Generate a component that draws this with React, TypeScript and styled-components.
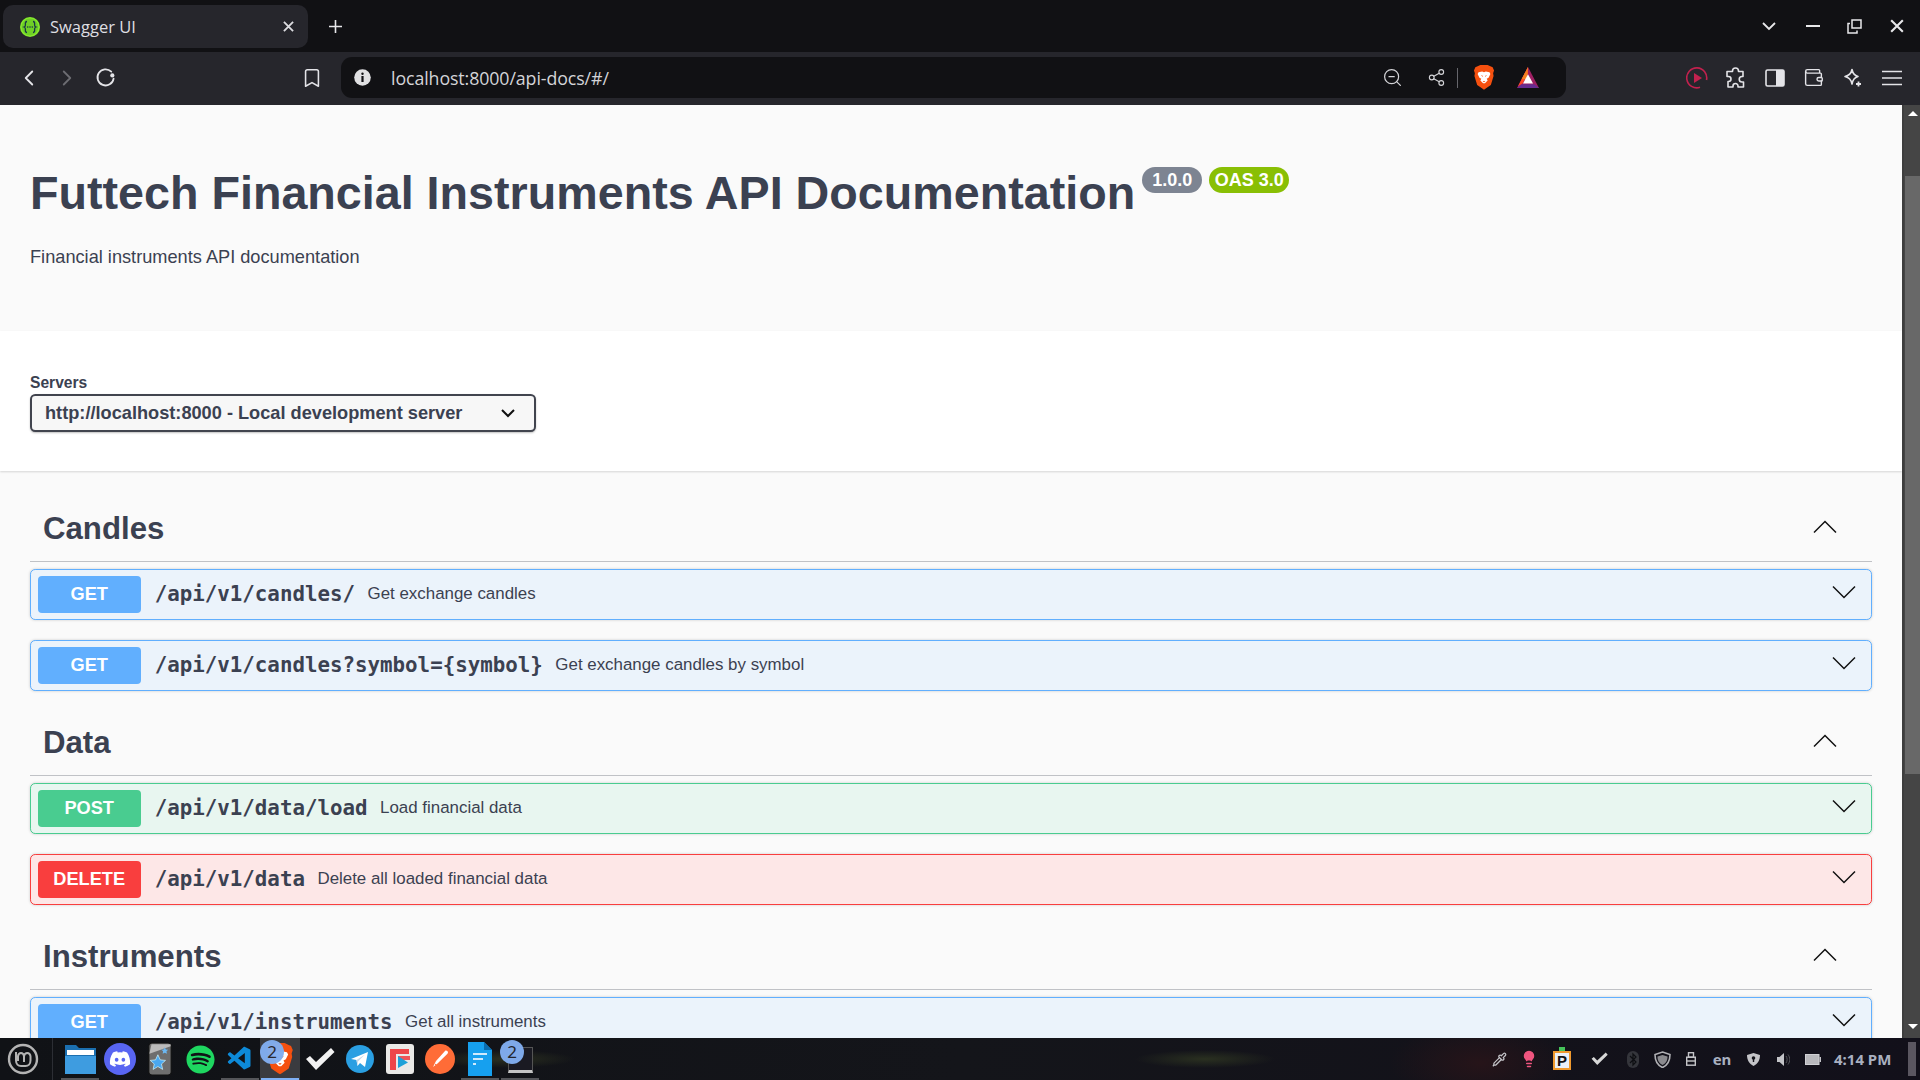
import React from 'react';
import styled, { createGlobalStyle } from 'styled-components';
import { ChevronLeft, ChevronRight, Bookmark, ZoomOut, Share2, Wallet, Pipette, Lightbulb } from 'lucide-react';
import { FaDiscord, FaSpotify } from 'react-icons/fa';
import { VscVscode } from 'react-icons/vsc';

const Global = createGlobalStyle`
  html, body { margin: 0; padding: 0; height: 100%; overflow: hidden; background: #111114; }
  * { box-sizing: border-box; }
`;

const Screen = styled.div`
  width: 1920px; height: 1080px; display: flex; flex-direction: column; overflow: hidden;
  font-family: "Liberation Sans", Arial, sans-serif;
`;

/* browser chrome */
const TabStrip = styled.div`
  height: 52px; flex: none; background: #111114; display: flex; align-items: flex-start; padding-left: 3px;
`;
const Tab = styled.div`
  width: 305px; height: 43px; margin-top: 5px; background: #26262c; border-radius: 10px;
  display: flex; align-items: center; padding: 0 14px 0 17px; color: #dcdce0;
`;
const TabTitle = styled.span`
  margin-left: 10px; flex: 1; font: 400 16.500px "Open Sans", "Noto Sans", sans-serif; color: #dedee2;
`;
const NewTab = styled.div`
  margin: 19px 0 0 20px; color: #e8e8ea; display: flex;
`;
const WindowControls = styled.div`
  margin-left: auto; display: flex; align-items: center; height: 52px; color: #e8e8ea;
`;
const WindowButton = styled.div<{ $w: number }>`
  width: ${p => p.$w}px; display: flex; justify-content: center; align-items: center;
`;
const Toolbar = styled.div`
  height: 53px; flex: none; background: #26262c; display: flex; align-items: center; padding: 0 9px 2px 10px;
`;
const Slot = styled.div<{ $dim?: boolean }>`
  width: 38px; height: 38px; flex: none; display: flex; align-items: center; justify-content: center;
  color: ${p => (p.$dim ? '#6c6c72' : '#e4e4e8')};
`;
const BookmarkSlot = styled(Slot)`
  margin-left: 169px;
`;
const ExtSlot = styled(Slot)`
  width: 39px;
`;
const UrlBar = styled.div`
  width: 1225px; height: 41px; flex: none; margin-left: 10px; background: #111114; border-radius: 11px;
  display: flex; align-items: center; padding: 0 12px 0 12px; color: #d4d4d8;
`;
const UrlInfo = styled.div`
  width: 18px; display: flex; align-items: center; justify-content: center;
`;
const UrlText = styled.span`
  margin-left: 20px; flex: 1; font: 400 17.800px "Open Sans", "Noto Sans", sans-serif; color: #d4d4d8;
  letter-spacing: -0.1px;
`;
const UrlIcon = styled.div<{ $w: number }>`
  width: ${p => p.$w}px; display: flex; justify-content: center; align-items: center;
`;
const UrlDivider = styled.div`
  width: 1px; height: 20px; background: #66666c; margin: 0 8px 0 2px;
`;
const ToolbarEnd = styled.div`
  margin-left: auto; display: flex; align-items: center;
`;

/* page viewport */
const Viewport = styled.div`
  flex: 1; min-height: 0; display: flex; background: #fafafa;
`;
const Doc = styled.div`
  flex: 1; min-width: 0; overflow: hidden; color: #3b4151;
`;
const Scrollbar = styled.div`
  width: 18px; flex: none; background: #454545; display: flex; flex-direction: column; align-items: center;
  padding-left: 2px; border-left: 2px solid #3e3e3e;
`;
const ArrowUp = styled.div`
  width: 0; height: 0; margin-top: 6px; margin-left: -1px;
  border-left: 5px solid transparent; border-right: 5px solid transparent; border-bottom: 5px solid #fff;
`;
const Thumb = styled.div`
  width: 15px; height: 598px; margin-top: 60px; margin-left: -1px; background: #686868;
`;
const ArrowDown = styled.div`
  width: 0; height: 0; margin-top: 250px; margin-left: -1px;
  border-left: 5px solid transparent; border-right: 5px solid transparent; border-top: 5px solid #fff;
`;

const InfoSection = styled.section`
  height: 226px; background: #fafafa; padding: 62px 30px 0;
`;
const TitleRow = styled.div`
  display: flex; align-items: flex-start;
`;
const Title = styled.h1`
  margin: 0; font: 700 46.670px/52px "Liberation Sans", Arial, sans-serif; color: #3b4151; white-space: nowrap;
`;
const Badge = styled.span<{ $bg: string; $w: number }>`
  width: ${p => p.$w}px; height: 26px; margin: 0 0 0 7px; border-radius: 14px; background: ${p => p.$bg};
  color: #fff; font: 700 18px/26px "Liberation Sans", Arial, sans-serif; text-align: center; flex: none;
`;
const Description = styled.p`
  margin: 23.500px 0 0; font: 400 18.200px/28px "Liberation Sans", Arial, sans-serif; color: #3b4151;
`;
const SchemeSection = styled.section`
  height: 140px; background: #fff; padding: 43px 30px 0; box-shadow: 0 1px 2px 0 rgba(0, 0, 0, 0.15);
  position: relative;
`;
const ServersLabel = styled.div`
  font: 700 15.600px/18px "Liberation Sans", Arial, sans-serif; color: #3b4151;
`;
const ServerSelect = styled.div`
  width: 506px; height: 38px; margin-top: 2px; border: 2.600px solid #41444e; border-radius: 5.200px; background: #f7f7f7;
  box-shadow: 0 1px 2px 0 rgba(0, 0, 0, 0.25); display: flex; align-items: center; justify-content: space-between;
  padding: 0 19px 0 13px; font: 700 18.200px "Liberation Sans", Arial, sans-serif; color: #3b4151;
`;
const Main = styled.main`
  padding: 26px 30px 0;
`;
const TagHeader = styled.div`
  height: 64.670px; border-bottom: 1px solid rgba(59, 65, 81, 0.3); margin-bottom: 7.330px; padding: 0 35px 3px 13px;
  display: flex; align-items: center; justify-content: space-between;
`;
const TagTitle = styled.h3`
  margin: 2px 0 0; font: 700 31.200px/1 "Liberation Sans", Arial, sans-serif; color: #3b4151;
`;
const TagChev = styled.div`
  display: flex; margin-top: -1px;
`;
const colors = {
  get: { border: '#61affe', bg: '#ebf3fb', btn: '#61affe' },
  post: { border: '#49cc90', bg: '#e8f6f0', btn: '#49cc90' },
  delete: { border: '#f93e3e', bg: '#fde7e7', btn: '#f93e3e' },
};
type Method = keyof typeof colors;
const Op = styled.div<{ $m: Method }>`
  height: 51px; margin-bottom: 20px; padding: 0 15px 0 6.700px; display: flex; align-items: center; flex: none;
  border: 1.300px solid ${p => colors[p.$m].border}; background: ${p => colors[p.$m].bg}; border-radius: 5.200px;
  box-shadow: 0 0 3px rgba(0, 0, 0, 0.19);
`;
const MethodButton = styled.span<{ $m: Method }>`
  width: 103px; height: 37px; flex: none; background: ${p => colors[p.$m].btn}; border-radius: 4px; color: #fff;
  font: 700 18.200px/36px "Liberation Sans", Arial, sans-serif; text-align: center;
`;
const Path = styled.span`
  margin-left: 14px; font: 700 20.800px "DejaVu Sans Mono", monospace; color: #3b4151; white-space: nowrap;
`;
const Summary = styled.span`
  margin-left: 12.500px; font: 400 16.900px "Liberation Sans", Arial, sans-serif; color: #3b4151; white-space: nowrap;
`;
const OpChevron = styled.div`
  margin-left: auto; display: flex; margin-top: -5px;
`;

/* taskbar */
const Taskbar = styled.footer`
  height: 42px; flex: none; display: flex; align-items: center;
  background:
    radial-gradient(ellipse 70px 9px at 505px 21px, #2b3020 0%, transparent 100%),
    radial-gradient(ellipse 70px 9px at 1205px 21px, #2a3020 0%, transparent 100%),
    radial-gradient(ellipse 90px 40px at 1480px 25px, #261419 0%, transparent 100%),
    linear-gradient(90deg, #101216, #14151a 50%, #12101a);
`;
const MintSlot = styled.div`
  width: 53px; height: 42px; flex: none; display: flex; justify-content: center; align-items: center;
  border-right: 1px solid #2c2e34; padding-right: 6px; margin-right: 7px;
`;
const Launcher = styled.div<{ $active?: boolean; $open?: boolean }>`
  width: 40px; height: 42px; flex: none; position: relative; display: flex; align-items: center; justify-content: center;
  background: ${p => (p.$active ? '#3a3b3f' : 'transparent')};
  &::after {
    content: ''; position: absolute; left: 1px; right: 1px; bottom: 0; height: 2px;
    background: ${p => (p.$active ? '#7fb0f4' : p.$open ? '#55565a' : 'transparent')};
  }
`;
const CountBadge = styled.span`
  position: absolute; top: 2px; left: 0; width: 24px; height: 24px; border-radius: 50%; background: #82aef0;
  color: #23262e; font: 400 17px/24px "Noto Sans", sans-serif; text-align: center; opacity: 0.97;
`;
const Tray = styled.div`
  margin-left: auto; display: flex; align-items: center; height: 42px; padding-right: 4px;
`;
const TrayItem = styled.div<{ $w: number }>`
  width: ${p => p.$w}px; flex: none; display: flex; justify-content: center; align-items: center; color: #c4c4c8;
`;
const LangText = styled.span`
  font: 700 15px "Noto Sans", sans-serif; color: #a9b0c0;
`;
const Clock = styled.span`
  margin: 0 10px 0 6px; width: 64px; font: 700 15px "Noto Sans", sans-serif; color: #a9b0c0; white-space: nowrap;
`;
const Handle = styled.div`
  width: 8px; height: 34px; background: #5a5660;
`;
const ClipboardP = styled.div`
  width: 18px; height: 19px; border: 2px solid #f09a2e; background: #eaf0f8; margin-top: 3px; position: relative;
  font: 700 15px/15px "Liberation Sans", sans-serif; color: #111; text-align: center;
  &::before {
    content: ''; position: absolute; top: -6px; left: 4px; width: 6px; height: 4px; background: #45c45a;
  }
`;

const Swag = ({ size = 20 }: { size?: number }) => (
  <svg width={size} height={size} viewBox="0 0 20 20">
    <circle cx="10" cy="10" r="10" fill="#85ea2d" />
    <circle cx="10" cy="10" r="8.400" fill="#6fcf26" />
    <path d="M7 4.500c-2 0-1.600 2-1.600 3.400 0 1-.4 1.800-1.300 2.100.9.3 1.300 1.100 1.300 2.100 0 1.400-.4 3.400 1.600 3.400M13 4.500c2 0 1.600 2 1.600 3.400 0 1 .4 1.800 1.300 2.100-.9.3-1.300 1.100-1.300 2.100 0 1.400.4 3.400-1.600 3.400" fill="none" stroke="#173647" strokeWidth="1.300" />
    <circle cx="7.700" cy="10" r=".8" fill="#173647" /><circle cx="10" cy="10" r=".8" fill="#173647" /><circle cx="12.300" cy="10" r=".8" fill="#173647" />
  </svg>
);
const CloseX = ({ size = 12, w = 2 }: { size?: number; w?: number }) => (
  <svg width={size} height={size} viewBox="0 0 12 12"><path d="M1 1l10 10M11 1L1 11" stroke="currentColor" strokeWidth={w} fill="none" /></svg>
);
const Plus = () => (
  <svg width="15" height="15" viewBox="0 0 15 15"><path d="M7.500 1v13M1 7.500h13" stroke="currentColor" strokeWidth="1.600" /></svg>
);
const Reload = () => (
  <svg width="21" height="21" viewBox="0 0 20 20">
    <path d="M15.500 4.400A7.700 7.700 0 1 0 17.700 11" fill="none" stroke="currentColor" strokeWidth="1.700" strokeLinecap="round" />
    <circle cx="16.500" cy="8" r="2" fill="currentColor" />
  </svg>
);
const InfoDot = () => (
  <svg width="17" height="17" viewBox="0 0 17 17">
    <circle cx="8.500" cy="8.500" r="8.300" fill="#e0e0e2" />
    <circle cx="8.500" cy="4.800" r="1.200" fill="#111114" /><rect x="7.400" y="7" width="2.200" height="6" fill="#111114" />
  </svg>
);
const Brave = ({ size = 22 }: { size?: number }) => (
  <svg width={size} height={size * 1.12} viewBox="0 0 24 27">
    <path d="M5 1.500 8 0h8l3 1.500 2.500 1 1.500 3.500-1 3 .5 3-3 10-6 4-1.500 1-1.500-1-6-4-3-10 .5-3-1-3L2.500 2.500z" fill="#f5500f" />
    <path d="M6 8l4-1 2 1 2-1 4 1 1 2-2 4-2 1 1 2-3 3h-2l-3-3 1-2-2-1-2-4z" fill="#fff" />
    <path d="M8.500 11l2.500 1-.5 1zM15.500 11l-2.500 1 .5 1zM10.500 17.500h3L12 19z" fill="#f5500f" />
  </svg>
);
const Bat = () => (
  <svg width="24" height="21" viewBox="0 0 24 23">
    <path d="M12 0 24 23H0z" fill="#9e1f63" />
    <path d="M12 0 1 21 6 18 12 7z" fill="#ff4724" />
    <path d="M12 0 5 13.500h6z" fill="#f58220" />
    <path d="M0 23l5-4h14l5 4z" fill="#662d91" />
    <path d="M12 8l5.500 10h-11z" fill="#fff" />
  </svg>
);
const Chev = ({ up, w = 24, h = 14, sw = 1.500 }: { up?: boolean; w?: number; h?: number; sw?: number }) => (
  <svg width={w} height={h} viewBox={`0 0 ${w} ${h}`}>
    <path d={up ? `M1 ${h - 1.500} ${w / 2} 1.500 ${w - 1} ${h - 1.500}` : `M1 1.500 ${w / 2} ${h - 1.500} ${w - 1} 1.500`} fill="none" stroke="#111" strokeWidth={sw} />
  </svg>
);
const SmallChev = ({ color = 'currentColor', w = 1.800 }: { color?: string; w?: number }) => (
  <svg width="14" height="9" viewBox="0 0 14 9"><path d="M1 1l6 6 6-6" fill="none" stroke={color} strokeWidth={w} /></svg>
);
const PlayRing = () => (
  <svg width="22" height="22" viewBox="0 0 22 22">
    <path d="M14 20.300A10 10 0 1 1 20.500 13" fill="none" stroke="#c2214e" strokeWidth="1.600" />
    <path d="M8 6l8 5-8 5z" fill="#c2214e" />
  </svg>
);
const PuzzlePiece = () => (
  <svg width="21" height="21" viewBox="0 0 21 21" fill="none" stroke="currentColor" strokeWidth="1.600" strokeLinejoin="round">
    <path d="M7.500 4.500V4a3 3 0 0 1 6 0v.5h4.500v5H17a2.500 2.500 0 0 0 0 5.500h1.500v5H13v-1a2.500 2.500 0 0 0-5 0v1H3v-5.500h.5a2.500 2.500 0 0 0 0-5H2v-5z" />
  </svg>
);
const SidePanel = () => (
  <svg width="20" height="20" viewBox="0 0 20 20">
    <rect x="1" y="2" width="18" height="16" rx="1.500" fill="none" stroke="currentColor" strokeWidth="1.600" />
    <rect x="11" y="2" width="8" height="16" fill="currentColor" />
  </svg>
);
const LeoStar = () => (
  <svg width="20" height="20" viewBox="0 0 20 20">
    <path d="M9 1.500c.8 4 2.500 6 6 7-3.500 1-5.200 3-6 7.500-.8-4.500-2.500-6.500-7-7.500 4.500-1 6.200-3 7-7z" fill="none" stroke="currentColor" strokeWidth="1.600" strokeLinejoin="round" />
    <path d="M15.500 13.500v5M13 16h5" stroke="currentColor" strokeWidth="1.800" />
  </svg>
);
const Burger = () => (
  <svg width="20" height="16" viewBox="0 0 20 16"><path d="M0 1.500h20M0 8h20M0 14.500h20" stroke="currentColor" strokeWidth="1.600" /></svg>
);
const Restore = () => (
  <svg width="15" height="15" viewBox="0 0 15 15" fill="none" stroke="currentColor" strokeWidth="1.500">
    <rect x="5" y="1" width="9" height="8" /><path d="M3 4.500H1v9.500h9v-2.500" />
  </svg>
);
const Minimize = () => (
  <svg width="14" height="4" viewBox="0 0 14 4"><path d="M0 2h14" stroke="currentColor" strokeWidth="2" /></svg>
);

const MintLogo = () => (
  <svg width="32" height="32" viewBox="0 0 32 32" fill="none" stroke="#b4b4b4">
    <circle cx="16" cy="16" r="14" strokeWidth="2.400" />
    <path d="M9 9v8.500c0 3.300 2.200 5.500 5 5.500h4.500c2.800 0 5-2.200 5-5.500V13.500c0-2-1.500-3.500-3.200-3.500S17 11.500 17 13.500V19M17 13.500c0-2-1.500-3.500-3-3.500s-3 1.500-3 3.500V18" strokeWidth="2" />
  </svg>
);
const Folder = () => (
  <svg width="31" height="30" viewBox="0 0 31 30">
    <path d="M0 1h11l3 3h17v26H0z" fill="#1b6fb0" />
    <rect x="2" y="6" width="27" height="5" fill="#fff" />
    <path d="M0 12h31v18H0z" fill="#3e9ce0" />
  </svg>
);
const DiscordIcon = styled.div`
  width: 32px; height: 32px; border-radius: 50%; background: #5865f2; color: #fff; display: flex; align-items: center; justify-content: center;
`;
const Anki = () => (
  <svg width="24" height="34" viewBox="0 0 22 32">
    <rect x="0.500" y="1" width="21" height="30" rx="3" fill="#6e6e6e" stroke="#111" />
    <path d="M1 11 21 4v-2H3z" fill="#bbb" />
    <path d="M9 12l2.200 4.800 5 .5-3.800 3.400 1.100 5.100L9 23.100l-4.500 2.700 1.100-5.100L1.800 17.300l5-.5z" fill="#4aa8f0" stroke="#dff" strokeWidth=".6" />
    <path d="M15.500 5l1 2 2.200.3-1.600 1.500.4 2.200-2-1-2 1 .4-2.200-1.600-1.500 2.200-.3z" fill="#6cb8f2" />
  </svg>
);
const BigCheck = ({ size = 30, color = '#f2f2f2' }: { size?: number; color?: string }) => (
  <svg width={size} height={size * 0.8} viewBox="0 0 30 24">
    <path d="M1 12 5 9l6 6L26 1l3.500 4L11 23z" fill={color} />
  </svg>
);
const Telegram = () => (
  <svg width="28" height="28" viewBox="0 0 28 28">
    <circle cx="14" cy="14" r="14" fill="#2a9fe2" />
    <path d="M5 14 22 7l-3 15-5-4-2.500 3-1-6z" fill="#fff" />
    <path d="M10.500 15 19 9.500 12 16.500 11.500 21z" fill="#c8daea" />
  </svg>
);
const FlipApp = () => (
  <svg width="28" height="30" viewBox="0 0 28 30">
    <rect width="28" height="30" rx="3" fill="#e9e9e7" />
    <path d="M4 5h19v5H10v16H4z" fill="#ee4649" />
    <path d="M12 12h12v4H12z" fill="#ee4649" opacity=".9" />
    <path d="M12 12l10 6.500L12 24z" fill="#1da1d8" />
  </svg>
);
const Postman = () => (
  <svg width="30" height="30" viewBox="0 0 30 30">
    <circle cx="15" cy="15" r="15" fill="#ff6c37" />
    <path d="M8 23l3-6 9-10c1-1 3 0 3 1.500 0 .7-.3 1-.8 1.500l-9.700 9.500z" fill="#fff" />
    <path d="M10 20l2.500 2" stroke="#ff6c37" strokeWidth="1" />
  </svg>
);
const DocApp = () => (
  <svg width="24" height="34" viewBox="0 0 24 34">
    <path d="M0 0h16l8 8v26H0z" fill="#16a0ef" />
    <path d="M16 0l8 8h-8z" fill="#0a6db0" />
    <path d="M5 11h14v2H5zM5 16h10v2H5zM5 21h3v2H5z" fill="#cfeafc" />
  </svg>
);
const TerminalIcon = styled.div`
  width: 25px; height: 26px; background: #1a1a22; border: 1px solid #555; border-bottom: 3px solid #c4c4c4; margin-top: 2px;
`;
const BluetoothPill = () => (
  <svg width="12" height="17" viewBox="0 0 12 17">
    <rect width="12" height="17" rx="6" fill="#34353b" />
    <path d="M3 5l6 6-3 3V3l3 3-6 6" fill="none" stroke="#0d0e12" strokeWidth="1.200" />
  </svg>
);
const ShieldIcon = () => (
  <svg width="17" height="17" viewBox="0 0 17 17">
    <path d="M8.500 1 16 3.500c0 6-2 10.500-7.500 13C3 14 1 9.500 1 3.500z" fill="none" stroke="#b0b0b4" strokeWidth="1.600" />
    <path d="M8.500 4 13.500 5.500c0 4-1.300 6.500-5 8.500-3.700-2-5-4.500-5-8.500z" fill="#8a8a8e" />
  </svg>
);
const UsbStick = () => (
  <svg width="10" height="14" viewBox="0 0 10 14" fill="none" stroke="#c4c4c8" strokeWidth="1.400">
    <rect x="2.500" y=".7" width="5" height="4.500" /><rect x=".7" y="5.200" width="8.600" height="8" />
    <path d="M1 9h8" />
  </svg>
);
const ShieldLock = () => (
  <svg width="13" height="13" viewBox="0 0 13 13">
    <path d="M6.500 0 13 2c0 5-2 8.500-6.500 11C2 10.500 0 7 0 2z" fill="#c4c4c8" />
    <circle cx="6.500" cy="5" r="1.800" fill="#14141a" /><rect x="5.800" y="5" width="1.400" height="4" fill="#14141a" />
  </svg>
);
const Speaker = () => (
  <svg width="13" height="13" viewBox="0 0 13 13">
    <path d="M0 4h2.500L7 0v13L2.500 9H0z" fill="#c4c4c8" />
    <path d="M9 3c1.500 2 1.500 5 0 7M11 1.500c2.300 3 2.300 7 0 10" fill="none" stroke="#55555a" strokeWidth="1" />
  </svg>
);
const BatteryIcon = () => (
  <svg width="16" height="11" viewBox="0 0 16 11">
    <rect x=".5" y=".5" width="13.500" height="10" fill="#b8b8bc" stroke="#d0d0d4" />
    <rect x="14.500" y="3" width="1.500" height="5" fill="#c4c4c8" />
  </svg>
);

const ops = {
  candles: [
    { m: 'get', path: '/api/v1/candles/', text: 'Get exchange candles' },
    { m: 'get', path: '/api/v1/candles?symbol={symbol}', text: 'Get exchange candles by symbol' },
  ],
  data: [
    { m: 'post', path: '/api/v1/data/load', text: 'Load financial data' },
    { m: 'delete', path: '/api/v1/data', text: 'Delete all loaded financial data' },
  ],
  instruments: [{ m: 'get', path: '/api/v1/instruments', text: 'Get all instruments' }],
} as const;

const Tag = ({ name, items }: { name: string; items: readonly { m: Method; path: string; text: string }[] }) => (
  <section>
    <TagHeader>
      <TagTitle>{name}</TagTitle>
      <TagChev><Chev up /></TagChev>
    </TagHeader>
    {items.map(o => (
      <Op key={o.path} $m={o.m}>
        <MethodButton $m={o.m}>{o.m.toUpperCase()}</MethodButton>
        <Path>{o.path}</Path>
        <Summary>{o.text}</Summary>
        <OpChevron><Chev /></OpChevron>
      </Op>
    ))}
  </section>
);

export default function App() {
  return (
    <Screen>
      <Global />
      <TabStrip>
        <Tab>
          <Swag />
          <TabTitle>Swagger UI</TabTitle>
          <CloseX size={11} />
        </Tab>
        <NewTab><Plus /></NewTab>
        <WindowControls>
          <WindowButton $w={46}><SmallChev /></WindowButton>
          <WindowButton $w={42}><Minimize /></WindowButton>
          <WindowButton $w={40}><Restore /></WindowButton>
          <WindowButton $w={46}><CloseX size={14} w={1.8} /></WindowButton>
        </WindowControls>
      </TabStrip>
      <Toolbar>
        <Slot><ChevronLeft size={26} strokeWidth={1.7} /></Slot>
        <Slot $dim><ChevronRight size={26} strokeWidth={1.7} /></Slot>
        <Slot><Reload /></Slot>
        <BookmarkSlot><Bookmark size={22} strokeWidth={1.7} /></BookmarkSlot>
        <UrlBar>
          <UrlInfo><InfoDot /></UrlInfo>
          <UrlText>localhost:8000/api-docs/#/</UrlText>
          <UrlIcon $w={50}><ZoomOut size={21} strokeWidth={1.4} /></UrlIcon>
          <UrlIcon $w={38}><Share2 size={19} strokeWidth={1.4} /></UrlIcon>
          <UrlDivider />
          <UrlIcon $w={36}><Brave /></UrlIcon>
          <UrlIcon $w={52}><Bat /></UrlIcon>
        </UrlBar>
        <ToolbarEnd>
          <ExtSlot><PlayRing /></ExtSlot>
          <ExtSlot><PuzzlePiece /></ExtSlot>
          <ExtSlot><SidePanel /></ExtSlot>
          <ExtSlot><Wallet size={21} strokeWidth={1.6} /></ExtSlot>
          <ExtSlot><LeoStar /></ExtSlot>
          <ExtSlot><Burger /></ExtSlot>
        </ToolbarEnd>
      </Toolbar>
      <Viewport>
        <Doc>
          <InfoSection>
            <TitleRow>
              <Title>Futtech Financial Instruments API Documentation</Title>
              <Badge $bg="#7d8492" $w={60}>1.0.0</Badge>
              <Badge $bg="#89bf04" $w={80}>OAS 3.0</Badge>
            </TitleRow>
            <Description>Financial instruments API documentation</Description>
          </InfoSection>
          <SchemeSection>
            <ServersLabel>Servers</ServersLabel>
            <ServerSelect>
              http://localhost:8000 - Local development server
              <SmallChev color="#111" w={2} />
            </ServerSelect>
          </SchemeSection>
          <Main>
            <Tag name="Candles" items={ops.candles} />
            <Tag name="Data" items={ops.data} />
            <Tag name="Instruments" items={ops.instruments} />
          </Main>
        </Doc>
        <Scrollbar>
          <ArrowUp />
          <Thumb />
          <ArrowDown />
        </Scrollbar>
      </Viewport>
      <Taskbar>
        <MintSlot><MintLogo /></MintSlot>
        <Launcher $open><Folder /></Launcher>
        <Launcher><DiscordIcon><FaDiscord size={22} /></DiscordIcon></Launcher>
        <Launcher><Anki /></Launcher>
        <Launcher><FaSpotify size={29} color="#1ed760" /></Launcher>
        <Launcher $open><VscVscode size={28} color="#0d8ad8" /></Launcher>
        <Launcher $active><Brave size={28} /><CountBadge>2</CountBadge></Launcher>
        <Launcher><BigCheck /></Launcher>
        <Launcher><Telegram /></Launcher>
        <Launcher><FlipApp /></Launcher>
        <Launcher><Postman /></Launcher>
        <Launcher $open><DocApp /></Launcher>
        <Launcher $open><TerminalIcon /><CountBadge>2</CountBadge></Launcher>
        <Tray>
          <TrayItem $w={30}><Pipette size={15} /></TrayItem>
          <TrayItem $w={30}><Lightbulb size={18} fill="#f0557f" color="#f0557f" /></TrayItem>
          <TrayItem $w={36}><ClipboardP>P</ClipboardP></TrayItem>
          <TrayItem $w={38}><BigCheck size={17} color="#d8d8d8" /></TrayItem>
          <TrayItem $w={30}><BluetoothPill /></TrayItem>
          <TrayItem $w={28}><ShieldIcon /></TrayItem>
          <TrayItem $w={30}><UsbStick /></TrayItem>
          <TrayItem $w={32}><LangText>en</LangText></TrayItem>
          <TrayItem $w={30}><ShieldLock /></TrayItem>
          <TrayItem $w={30}><Speaker /></TrayItem>
          <TrayItem $w={30}><BatteryIcon /></TrayItem>
          <Clock>4:14 PM</Clock>
          <Handle />
        </Tray>
      </Taskbar>
    </Screen>
  );
}
